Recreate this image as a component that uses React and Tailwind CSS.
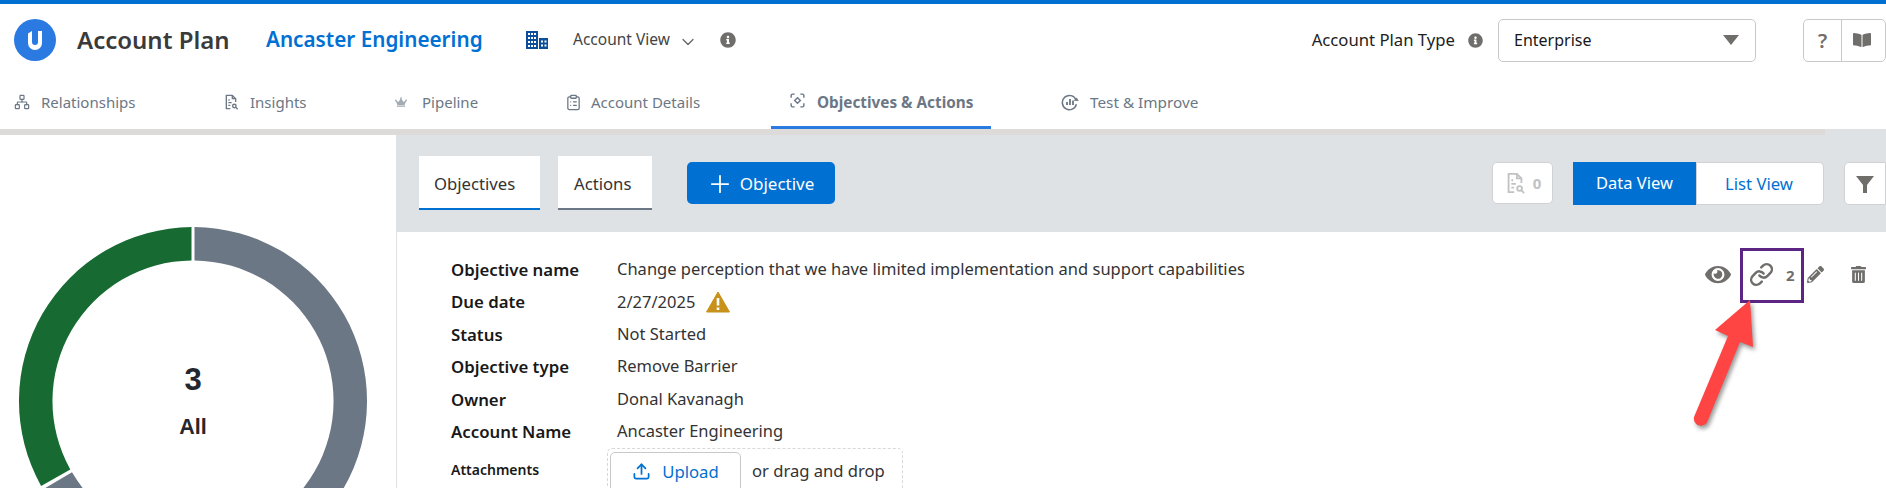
import { ChevronDown, Plus, Network, ClipboardList, Link, Upload } from "lucide-react";
import { FaEye, FaPencilAlt, FaInfoCircle, FaBookOpen, FaTrashAlt, FaCrown } from "react-icons/fa";

const font = { fontFamily: '"Noto Sans", sans-serif' };

function DocSearch({ className }) {
  return (
    <svg viewBox="0 0 24 24" className={className} fill="none" stroke="currentColor" strokeWidth="2">
      <path d="M11 22H5V2h9l5 5v5" />
      <path d="M14 2v5h5M8 9h2M8 13h5M8 17h3" />
      <circle cx="17" cy="18" r="2.6" />
      <path d="m19 20 3 3" />
    </svg>
  );
}

function ScanDiamond({ className }) {
  return (
    <svg viewBox="0 0 24 24" className={className} fill="none" stroke="currentColor" strokeWidth="2">
      <path d="M3 8V5a2 2 0 0 1 2-2h3M16 3h3a2 2 0 0 1 2 2v3M21 16v3a2 2 0 0 1-2 2h-3M8 21H5a2 2 0 0 1-2-2v-3" />
      <path d="m12 8 4 4-4 4-4-4Z" />
    </svg>
  );
}

function ChartCycle({ className }) {
  return (
    <svg viewBox="0 0 24 24" className={className} fill="none" stroke="currentColor" strokeWidth="2">
      <path d="M20 9a9.500 9.500 0 1 0 .5 6" />
      <path d="M8 16v-4M12 16V8M16 16v-6" strokeWidth="2.400" />
      <path d="m18 10 5 0-2.500-3.500Z" fill="currentColor" strokeWidth="1" />
    </svg>
  );
}

function Logo() {
  return (
    <svg viewBox="0 0 42 42" className="w-[42px] h-[42px] shrink-0">
      <circle cx="21" cy="21" r="21" fill="#2a7ae2" />
      <path d="M14 14.500 18 12v11a3 3 0 0 0 6 0V12h4v12a7 7 0 0 1-14 0Z" fill="#fff" />
    </svg>
  );
}

function Buildings({ className }) {
  return (
    <svg viewBox="0 0 22 18" className={className}>
      <path fill="#0b4f9c" d="M0 0h12v18H0Z" />
      <path fill="#0b4f9c" d="M13 7h9v11h-9Z" />
      <path fill="#fff" d="M2 2h2v2H2ZM5 2h2v2H5ZM8 2h2v2H8ZM2 6h2v2H2ZM5 6h2v2H5ZM8 6h2v2H8ZM2 10h2v2H2ZM5 10h2v2H5ZM8 10h2v2H8ZM2 14h2v2H2ZM5 14h2v2H5ZM8 14h2v2H8ZM15 9.500h2v2h-2ZM18.500 9.500h2v2h-2ZM15 13.500h2v2h-2ZM18.500 13.500h2v2h-2Z" />
    </svg>
  );
}

function Donut() {
  return (
    <svg viewBox="0 0 396 353" className="w-[396px] h-[353px] block">
      <path d="M194.500 92A174 174 0 1 1 43.100 354.300L72 337.300A140.500 140.500 0 1 0 194.500 125.500Z" fill="#6b7785" />
      <path d="M191.500 92A174 174 0 0 0 41.100 350.900L70.300 334.500A140.500 140.500 0 0 1 191.500 125.500Z" fill="#166a32" />
    </svg>
  );
}

const rows = [
  ["Objective name", "Change perception that we have limited implementation and support capabilities", ""],
  ["Due date", "2/27/2025", "pt-[1px]"],
  ["Status", "Not Started", "pt-[1px]"],
  ["Objective type", "Remove Barrier", "pt-[1px]"],
  ["Owner", "Donal Kavanagh", "pt-[1px]"],
  ["Account Name", "Ancaster Engineering", ""],
];

export default function App() {
  return (
    <div style={font} className="h-[488px] w-[1886px] overflow-hidden bg-white text-[#181818]">
      <div className="h-1 bg-[#0070d2]" />

      {/* header */}
      <div className="h-[72px] flex items-center pl-[14px]">
        <Logo />
        <span className="ml-[21px] text-[24px] font-semibold text-[#3a3a3a] w-[189px]">Account Plan</span>
        <span className="text-[20.700px] font-semibold text-[#0070d2] w-[260px]">Ancaster Engineering</span>
        <Buildings className="w-[22px] h-[18px]" />
        <span className="ml-[25px] text-[15.500px] text-[#444]">Account View</span>
        <ChevronDown className="ml-[8px] mt-[3px] w-5 h-5 text-[#666]" strokeWidth={1.5} />
        <FaInfoCircle className="ml-[22px] w-4 h-4 text-[#706e6b]" />
        <div className="ml-auto flex items-center">
          <span className="text-[16.700px] text-[#222]">Account Plan Type</span>
          <FaInfoCircle className="ml-[13px] w-[15px] h-[15px] text-[#706e6b]" />
          <div className="ml-[15px] w-[258px] h-[43px] border border-[#c9c9c9] rounded-[5px] flex items-center justify-between pl-[15px] pr-[16px] text-[16px]">
            Enterprise
            <span className="w-0 h-0 border-l-[8px] border-r-[8px] border-t-[10px] border-l-transparent border-r-transparent border-t-[#706e6b]" />
          </div>
          <div className="ml-[47px] w-[83px] h-[43px] border border-[#c9c9c9] rounded-[5px] flex items-center">
            <span className="w-[38px] text-center text-[20px] font-semibold text-[#706e6b] border-r border-[#c9c9c9] h-full leading-[41px]">?</span>
            <FaBookOpen className="ml-[11px] w-[18px] h-[16px] text-[#706e6b]" />
          </div>
        </div>
      </div>

      {/* tabs */}
      <div className="h-[53px] flex items-start text-[15px] text-[#6b7785] pt-[14px] pl-[14px]">
        <div className="w-[209px] h-6 flex items-center gap-[12px]">
          <Network className="w-[16px] h-[18px] shrink-0" strokeWidth={1.8} />
          <span className="-ml-[1px]">Relationships</span>
        </div>
        <div className="w-[172px] h-6 flex items-center gap-[12px]">
          <DocSearch className="w-[16px] h-[18px] shrink-0" />
          <span className="-ml-[1px]">Insights</span>
        </div>
        <div className="w-[170px] h-6 flex items-center gap-[15px]">
          <FaCrown className="w-[12px] h-[12px] shrink-0 text-[#a3abb5]" />
          <span>Pipeline</span>
        </div>
        <div className="w-[206px] h-6 flex items-center gap-[9px]">
          <ClipboardList className="w-[17px] h-[21px] shrink-0" strokeWidth={1.8} />
          <span>Account Details</span>
        </div>
        <div className="h-[39px] w-[220px] flex items-start gap-[11px] pl-[18px] border-b-[3px] border-[#2a7ae2] font-bold text-[15.300px]">
          <ScanDiamond className="w-[17px] h-[17px] mt-[2px] shrink-0" />
          <span className="mt-[1px]">Objectives &amp; Actions</span>
        </div>
        <div className="ml-[70px] flex items-center gap-[11px] h-6 text-[15.300px]">
          <ChartCycle className="w-[18px] h-[18px] -mt-[1px] shrink-0" />
          <span>Test &amp; Improve</span>
        </div>
      </div>

      {/* strip */}
      <div className="h-[6px] flex">
        <div className="w-[1825px] bg-[#dddbda]" />
        <div className="flex-1 bg-[#dfe2e5]" />
      </div>

      <div className="flex">
        <aside className="relative w-[396px] shrink-0">
          <Donut />
          <div className="absolute left-0 w-[386px] top-[228px] text-center font-bold text-[#23272f]" style={{ fontFamily: '"Liberation Sans", sans-serif' }}>
            <div className="text-[31px] leading-[34px]">3</div>
            <div className="text-[21.500px] leading-[24px] mt-[18px]">All</div>
          </div>
        </aside>

        <main className="flex-1 border-l border-[#dfe2e5] relative">
          <div className="h-[97px] bg-[#dfe2e5] flex items-start pt-[21px] pl-[22px]">
            <div className="w-[121px] h-[54px] bg-white border-b-2 border-[#0070d2] flex items-center pl-[15px] pt-[3px] text-[16.700px] text-[#333]">Objectives</div>
            <div className="ml-[18px] w-[94px] h-[54px] bg-white border-b-2 border-[#6b7785] flex items-center pl-[16px] pt-[3px] text-[16.700px] text-[#333]">Actions</div>
            <button className="ml-[35px] mt-[6px] w-[148px] h-[42px] bg-[#0070d2] rounded-[5px] flex items-center justify-center gap-[6px] pr-[2px] pt-[1px] text-white text-[17px]">
              <Plus className="w-[28px] h-[28px]" strokeWidth={1.5} />
              Objective
            </button>
            <div className="ml-auto mt-[6px] flex items-start">
              <div className="w-[61px] h-[42px] bg-white border border-[#d0d3d6] rounded-[5px] flex items-center justify-center gap-[7px] text-[#c2c2c2] text-[15px] font-bold">
                <DocSearch className="w-[22px] h-[22px]" />
                0
              </div>
              <div className="ml-[20px] w-[123px] h-[43px] bg-[#0070d2] text-white text-[16.500px] flex items-center justify-center">Data View</div>
              <div className="w-[128px] h-[43px] bg-white border border-[#d0d3d6] rounded-r-[5px] text-[#0070d2] text-[16.700px] flex items-center justify-center pr-[2px]">List View</div>
              <div className="ml-[20px] w-[42px] h-[43px] bg-white border border-[#d0d3d6] rounded-l-[5px] flex items-center justify-center">
                <svg viewBox="0 0 20 20" className="w-5 h-5 text-[#706e6b]" fill="currentColor"><path d="M1 2h18l-7 9v8l-4 0V11Z" /></svg>
              </div>
            </div>
          </div>

          <div className="pl-[54px] pt-[21px]">
            {rows.map(([label, value, nudge]) => (
              <div key={label} className={`flex items-center h-[32.400px] ${nudge}`}>
                <span className="w-[166px] font-semibold text-[16.800px]">{label}</span>
                <span className="text-[16.500px] text-[#333] flex items-center gap-[11px]">
                  {value}
                  {label === "Due date" && (
                    <svg viewBox="0 0 24 22" className="w-6 h-[22px]">
                      <path d="M12 1 23.500 21H.5Z" fill="#c8921a" stroke="#c8921a" strokeLinejoin="round" />
                      <path d="M12 7v7.500M12 16.500v2.500" stroke="#fff" strokeWidth="2.600" />
                    </svg>
                  )}
                </span>
              </div>
            ))}
            <div className="flex items-start mt-[1px]">
              <span className="w-[156px] font-semibold text-[14px] mt-[11px]">Attachments</span>
              <div className="h-[60px] border border-dashed border-[#d8d8d8] rounded-[5px] pl-[2px] pt-[3px] w-[296px] flex items-start">
                <div className="w-[131px] h-[60px] border border-[#c9c9c9] rounded-[5px] flex items-start pt-[6px] justify-center gap-[11px] text-[#0070d2] text-[16.700px]">
                  <Upload className="w-[19px] h-[19px] mt-[3px]" strokeWidth={2.2} />
                  Upload
                </div>
                <span className="ml-[11px] mt-[7px] text-[16.600px] text-[#333]">or drag and drop</span>
              </div>
            </div>
          </div>

          {/* row actions */}
          <FaEye className="absolute left-[1308px] top-[128px] w-[26px] h-[23px] text-[#706e6b]" />
          <Link className="absolute left-[1352px] top-[127px] w-[25px] h-[25px] text-[#706e6b]" strokeWidth={2.400} />
          <span className="absolute left-[1389px] top-[129px] text-[15px] font-bold text-[#706e6b]">2</span>
          <FaPencilAlt className="absolute left-[1410px] top-[131px] w-[17px] h-[17px] text-[#706e6b]" />
          <FaTrashAlt className="absolute left-[1454px] top-[131px] w-[15px] h-[17px] text-[#706e6b]" />
        </main>
      </div>

      {/* annotation over the screenshot */}
      <div className="absolute left-[1740px] top-[248px] w-[64px] h-[55px] border-[3px] border-[#5c2483]" />
      <svg className="absolute left-[1680px] top-[290px] w-[100px] h-[150px] overflow-visible" viewBox="0 0 100 150">
        <path d="M70 10 35 40 48 46 14 127a7 7 0 0 0 14 3L60 52 73 57Z" fill="#ff4444" style={{ filter: "drop-shadow(2px 3px 2px rgba(0,0,0,.4))" }} />
      </svg>
    </div>
  );
}
